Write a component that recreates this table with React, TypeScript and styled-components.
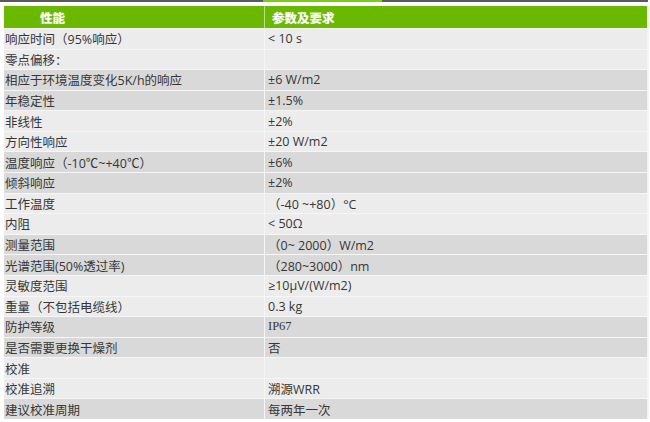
import styled, { createGlobalStyle } from 'styled-components'

const rows: { name: string; value: string; tone: 'light' | 'dark'; serif?: boolean }[] = [
  { name: '响应时间（95%响应）', value: '< 10 s', tone: 'light' },
  { name: '零点偏移：', value: '', tone: 'light' },
  { name: '相应于环境温度变化5K/h的响应', value: '±6 W/m2', tone: 'dark' },
  { name: '年稳定性', value: '±1.5%', tone: 'dark' },
  { name: '非线性', value: '±2%', tone: 'light' },
  { name: '方向性响应', value: '±20 W/m2', tone: 'light' },
  { name: '温度响应（-10℃~+40℃）', value: '±6%', tone: 'dark' },
  { name: '倾斜响应', value: '±2%', tone: 'dark' },
  { name: '工作温度', value: '（-40 ~+80）°C', tone: 'light' },
  { name: '内阻', value: '< 50Ω', tone: 'light' },
  { name: '测量范围', value: '（0~ 2000）W/m2', tone: 'dark' },
  { name: '光谱范围(50%透过率)', value: '（280~3000）nm', tone: 'dark' },
  { name: '灵敏度范围', value: '≥10μV/(W/m2)', tone: 'light' },
  { name: '重量（不包括电缆线）', value: '0.3 kg', tone: 'light' },
  { name: '防护等级', value: 'IP67', tone: 'dark', serif: true },
  { name: '是否需要更换干燥剂', value: '否', tone: 'dark' },
  { name: '校准', value: '', tone: 'light' },
  { name: '校准追溯', value: '溯源WRR', tone: 'light' },
  { name: '建议校准周期', value: '每两年一次', tone: 'dark' }
]

const App = () => (
  <>
    <GlobalStyle />
    <Page>
      <TopRule>
        <span className="gray" style={{ width: 263 }} />
        <span className="green" />
        <span className="gray grow" />
      </TopRule>
      <Table>
        <HeaderRow>
          <HeadCell $indent={36}>性能</HeadCell>
          <HeadCell $indent={7} $divider>参数及要求</HeadCell>
        </HeaderRow>
        {rows.map((r, i) => (
          <Row key={i} $tone={r.tone}>
            <Cell>{r.name}</Cell>
            <Cell $divider $serif={r.serif}>{r.value}</Cell>
          </Row>
        ))}
      </Table>
    </Page>
  </>
)

const GlobalStyle = createGlobalStyle`
  html, body {
    margin: 0;
    padding: 0;
    background: #ffffff;
  }
  body {
    font-family: 'Open Sans', 'Noto Sans CJK SC', sans-serif;
    text-spacing-trim: space-all;
    font-feature-settings: 'chws' 0, 'halt' 0;
  }
`

const Page = styled.div`
  width: 650px;
  height: 422px;
  overflow: hidden;
  background: #ffffff;
`

const TopRule = styled.div`
  display: flex;
  height: 2px;
  width: 648px;

  span {
    display: block;
    height: 2px;
  }

  .gray {
    background: #5a5a5a;
  }

  .green {
    width: 119px;
    background: #7ccc1a;
  }

  .grow {
    flex: 1;
  }
`

const Table = styled.div`
  display: flex;
  flex-direction: column;
  margin: 4px 0 0 4px;
  width: 643px;
  border-right: 2px solid #f4f4f4;
`

const HeaderRow = styled.div`
  display: grid;
  grid-template-columns: 260px 1fr;
  height: 22px;
  background: #6bb800;
`

const HeadCell = styled.div<{ $indent: number; $divider?: boolean }>`
  display: flex;
  align-items: center;
  padding-left: ${(p) => p.$indent}px;
  color: #ffffff;
  font-family: 'Noto Sans CJK SC', sans-serif;
  font-weight: 700;
  font-size: 12.5px;
  text-shadow: 0 0 1px rgba(255, 255, 255, 0.6);
  border-left: ${(p) => (p.$divider ? '1px solid #b9e08a' : 'none')};
`

const Row = styled.div<{ $tone: 'light' | 'dark' }>`
  display: grid;
  grid-template-columns: 260px 1fr;
  height: 19.58px;
  border-top: 1px solid #f6f6f6;
  background: ${(p) => (p.$tone === 'dark' ? '#d9d9d9' : '#ececec')};
`

const Cell = styled.div<{ $divider?: boolean; $serif?: boolean }>`
  display: flex;
  align-items: center;
  padding-left: ${(p) => (p.$divider ? '3px' : '1px')};
  color: #363636;
  font-size: 12.5px;
  white-space: nowrap;
  font-family: ${(p) =>
    p.$serif
      ? "'Liberation Serif', 'Noto Sans CJK SC', serif"
      : "'Open Sans', 'Noto Sans CJK SC', sans-serif"};
  border-left: ${(p) => (p.$divider ? '1px solid #f6f6f6' : 'none')};
`

export default App
